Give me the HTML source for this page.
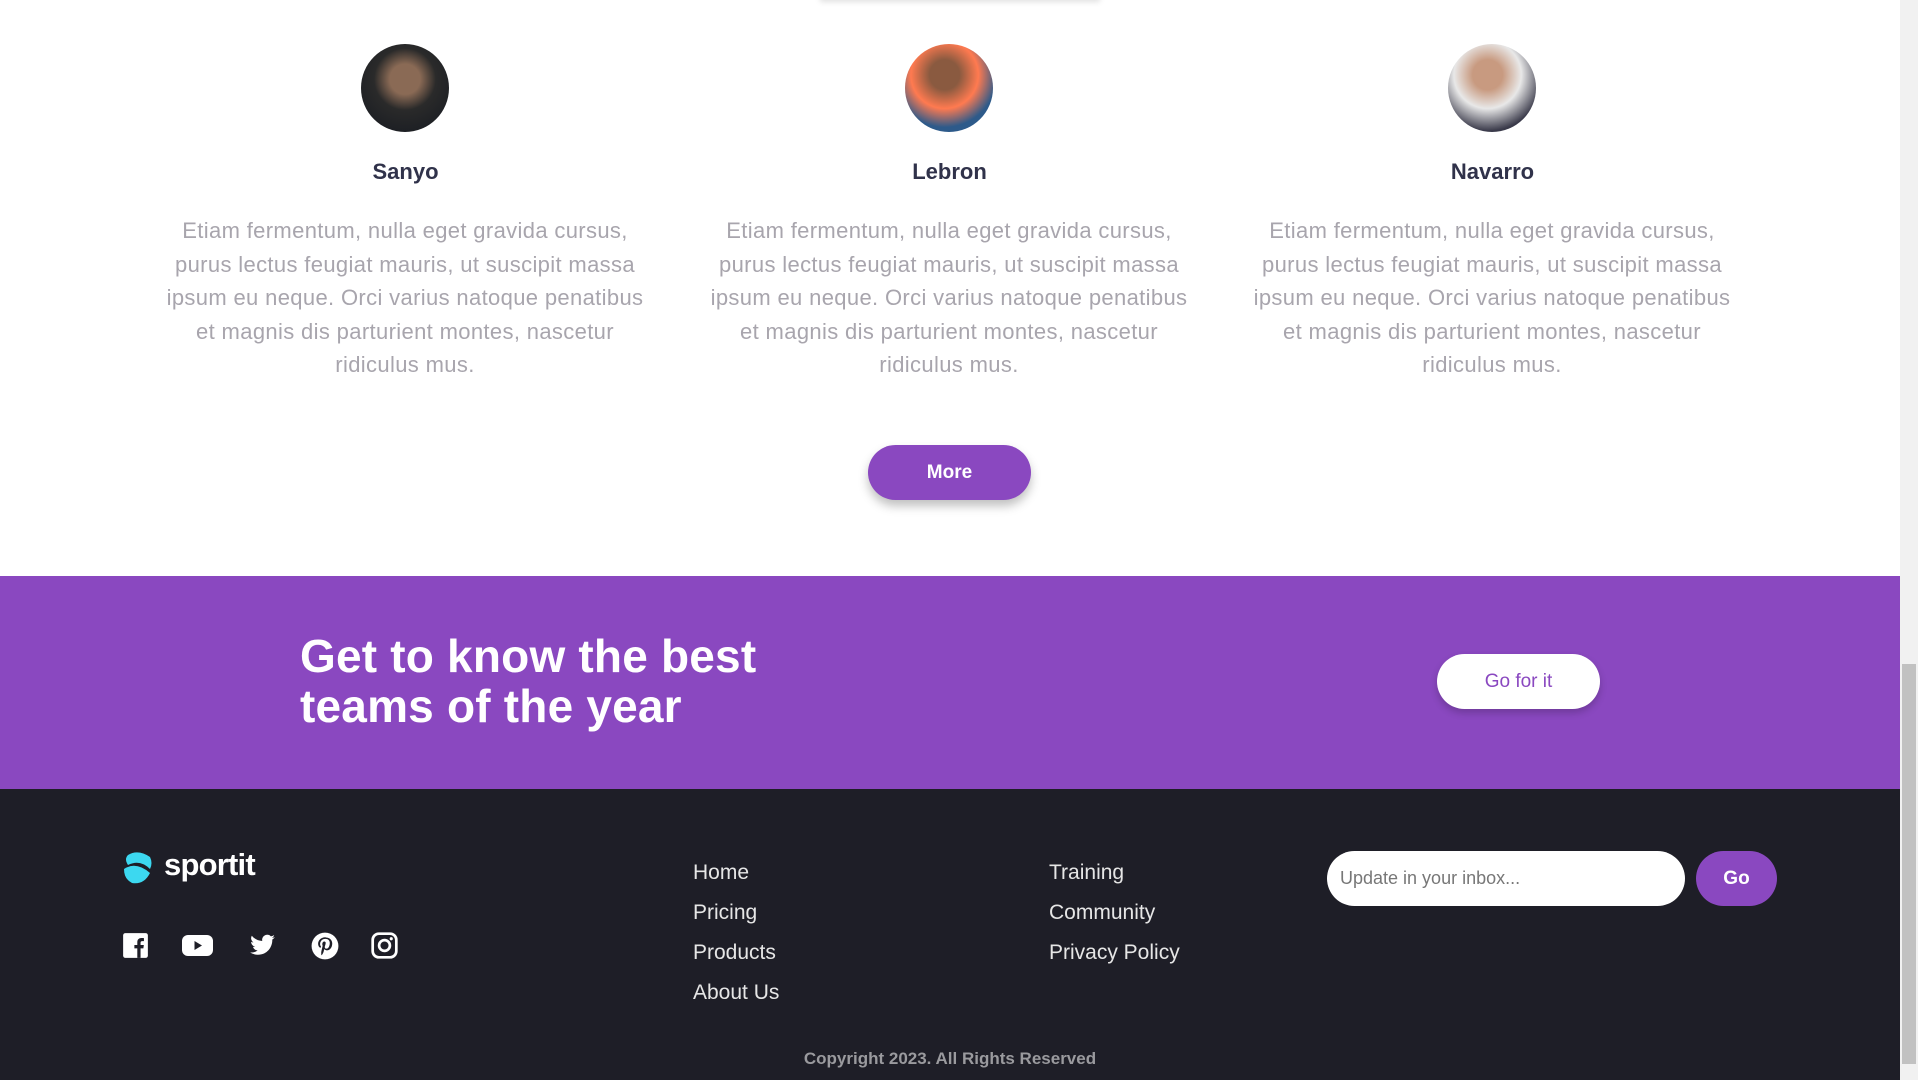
<!DOCTYPE html>
<html><head><meta charset="utf-8"><style>
*{margin:0;padding:0;box-sizing:border-box}
body{width:1918px;height:1080px;overflow:hidden;font-family:"Liberation Sans",sans-serif;background:#fff;position:relative}
.main{position:absolute;left:0;top:0;width:1900px;height:1080px}
.av{position:absolute;width:88px;height:88px;border-radius:50%;top:44px}
.name{position:absolute;top:159px;width:477px;text-align:center;font-weight:bold;font-size:22px;color:#30324a}
.p{position:absolute;top:214px;width:560px;text-align:center;font-size:22px;letter-spacing:0.35px;line-height:33.5px;color:#a8a5ad;white-space:nowrap}
.more{position:absolute;left:868px;top:445px;width:163px;height:55px;border-radius:28px;background:#8a48c0;color:#fff;font-weight:bold;font-size:19px;text-align:center;line-height:55px;box-shadow:0 6px 10px rgba(0,0,0,.25)}
.band{position:absolute;left:0;top:576px;width:1900px;height:213px;background:#8a48c0}
.band h2{position:absolute;left:300px;top:55px;color:#fff;font-size:46px;line-height:50px;font-weight:bold;letter-spacing:0.2px}
.gofor{position:absolute;left:1437px;top:78px;width:163px;height:55px;border-radius:28px;background:#fff;color:#8a48c0;font-size:19px;text-align:center;line-height:55px;box-shadow:0 4px 8px rgba(0,0,0,.2)}
.foot{position:absolute;left:0;top:789px;width:1900px;height:291px;background:#1e1e27}
.lk{position:absolute;color:#e6e6e6;font-size:21px}
.ic{position:absolute;top:143px}
.inp{position:absolute;left:1327px;top:62px;width:358px;height:55px;border-radius:28px;background:#fff;color:#777;font-size:18px;line-height:55px;padding-left:13px}
.go{position:absolute;left:1696px;top:62px;width:81px;height:55px;border-radius:28px;background:#8a48c0;color:#fff;font-size:19px;font-weight:bold;text-align:center;line-height:55px}
.copy{position:absolute;top:260px;left:0;width:1900px;text-align:center;color:#9a9a9e;font-size:17px}
.sb{position:absolute;left:1900px;top:0;width:18px;height:1080px;background:#f1f1f1}
.th{position:absolute;left:2px;top:664px;width:14px;height:400px;background:#c1c1c1}
</style></head><body>
<div class="main">
<div style="position:absolute;left:820px;top:-10px;width:280px;height:10px;box-shadow:0 2px 6px rgba(0,0,0,.12)"></div>
<div class="av" style="left:361px;background:radial-gradient(circle at 50% 40%,#8a6a55 0 22%,#2a2a2a 45%,#141820)"></div>
<div class="av" style="left:905px;background:radial-gradient(circle at 45% 35%,#8a5a40 0 20%,#ff7a50 45%,#2d5a8a 70%)"></div>
<div class="av" style="left:1448px;background:radial-gradient(circle at 45% 35%,#c89a80 0 20%,#e8e8e8 45%,#3a3a4a 75%)"></div>
<div class="name" style="left:167px">Sanyo</div>
<div class="name" style="left:711px">Lebron</div>
<div class="name" style="left:1254px">Navarro</div>
<div class="p" style="left:125px">Etiam fermentum, nulla eget gravida cursus,<br>purus lectus feugiat mauris, ut suscipit massa<br>ipsum eu neque. Orci varius natoque penatibus<br>et magnis dis parturient montes, nascetur<br>ridiculus mus.</div>
<div class="p" style="left:669px">Etiam fermentum, nulla eget gravida cursus,<br>purus lectus feugiat mauris, ut suscipit massa<br>ipsum eu neque. Orci varius natoque penatibus<br>et magnis dis parturient montes, nascetur<br>ridiculus mus.</div>
<div class="p" style="left:1212px">Etiam fermentum, nulla eget gravida cursus,<br>purus lectus feugiat mauris, ut suscipit massa<br>ipsum eu neque. Orci varius natoque penatibus<br>et magnis dis parturient montes, nascetur<br>ridiculus mus.</div>
<div class="more">More</div>
<div class="band"><h2>Get to know the best<br>teams of the year</h2><div class="gofor">Go for it</div></div>
<div class="foot">
<svg style="position:absolute;left:122px;top:62px" width="32" height="34" viewBox="0 0 32 34"><path d="M6 4 Q16 -2 28 6 Q31 12 28 18 Q18 8 6 14 Q2 8 6 4Z" fill="#3cd8f0"/><path d="M2 18 Q14 10 28 22 Q22 34 10 32 Q2 28 2 18Z" fill="#3cd8f0"/></svg>
<div style="position:absolute;left:164px;top:58px;color:#fff;font-size:31px;font-weight:bold;letter-spacing:-0.8px">sportit</div>
<svg class="ic" style="left:122px" width="27" height="27" viewBox="0 0 24 24"><rect x="1" y="1" width="22" height="22" rx="2" fill="#fff"/><path d="M16.5 23V14.5H19l.4-3h-2.9V9.6c0-.9.3-1.5 1.5-1.5h1.5V5.4c-.3 0-1.2-.1-2.200-.1-2.2 0-3.7 1.3-3.7 3.8v2.4H11v3h2.6V23z" fill="#1e1e27"/></svg>
<svg class="ic" style="left:181px" width="33" height="27" viewBox="0 0 33 27"><rect x="1" y="3" width="31" height="21" rx="6" fill="#fff"/><path d="M13.5 9v9l7.5-4.5z" fill="#1e1e27"/></svg>
<svg class="ic" style="left:248px" width="29" height="27" viewBox="0 0 24 24"><path d="M23 4.6c-.8.4-1.7.6-2.6.7.9-.6 1.6-1.4 2-2.5-.9.5-1.9.9-2.9 1.1A4.5 4.5 0 0 0 11.8 8 12.8 12.8 0 0 1 2.5 3.3a4.5 4.5 0 0 0 1.4 6c-.7 0-1.4-.2-2-.6 0 2.2 1.6 4 3.6 4.4-.7.2-1.4.2-2 .1.6 1.8 2.2 3.1 4.2 3.1A9 9 0 0 1 1 18.2 12.8 12.8 0 0 0 7.9 20.2c8.3 0 12.8-6.9 12.8-12.8v-.6c.9-.6 1.7-1.4 2.3-2.2z" fill="#fff"/></svg>
<svg class="ic" style="left:311px" width="28" height="28" viewBox="0 0 24 24"><circle cx="12" cy="12" r="11.5" fill="#fff"/><path d="M12.5 4.5c-4.3 0-6.4 3-6.4 5.6 0 1.5.6 2.9 1.8 3.4.2.1.4 0 .4-.2l.2-.7c.1-.2 0-.3-.1-.5-.4-.4-.6-1-.6-1.8 0-2.3 1.7-4.4 4.5-4.4 2.5 0 3.8 1.5 3.8 3.5 0 2.6-1.2 4.9-2.9 4.9-.9 0-1.6-.8-1.4-1.7.3-1.2.8-2.4.8-3.2 0-.7-.4-1.3-1.2-1.3-1 0-1.7 1-1.7 2.3 0 .8.3 1.4.3 1.4l-1.1 4.7c-.3 1.4 0 3.2 0 3.3h.4c.1-.2 1.1-1.5 1.5-2.9l.6-2.3c.3.6 1.2 1.1 2.1 1.1 2.8 0 4.7-2.5 4.7-6 0-2.6-2.2-5-5.5-5z" fill="#1e1e27"/></svg>
<svg class="ic" style="left:371px" width="27" height="27" viewBox="0 0 24 24"><rect x="1.5" y="1.5" width="21" height="21" rx="5.5" fill="none" stroke="#fff" stroke-width="2.4"/><circle cx="12" cy="12" r="4.8" fill="none" stroke="#fff" stroke-width="2.4"/><circle cx="18" cy="6" r="1.4" fill="#fff"/></svg>
<div class="lk" style="left:693px;top:72px">Home</div>
<div class="lk" style="left:693px;top:112px">Pricing</div>
<div class="lk" style="left:693px;top:152px">Products</div>
<div class="lk" style="left:693px;top:192px">About Us</div>
<div class="lk" style="left:1049px;top:72px">Training</div>
<div class="lk" style="left:1049px;top:112px">Community</div>
<div class="lk" style="left:1049px;top:152px">Privacy Policy</div>
<div class="inp">Update in your inbox...</div>
<div class="go">Go</div>
<div class="copy" style="font-weight:bold">Copyright 2023. All Rights Reserved</div>
</div>
</div>
<div class="sb"><div class="th"></div></div>
</body></html>
